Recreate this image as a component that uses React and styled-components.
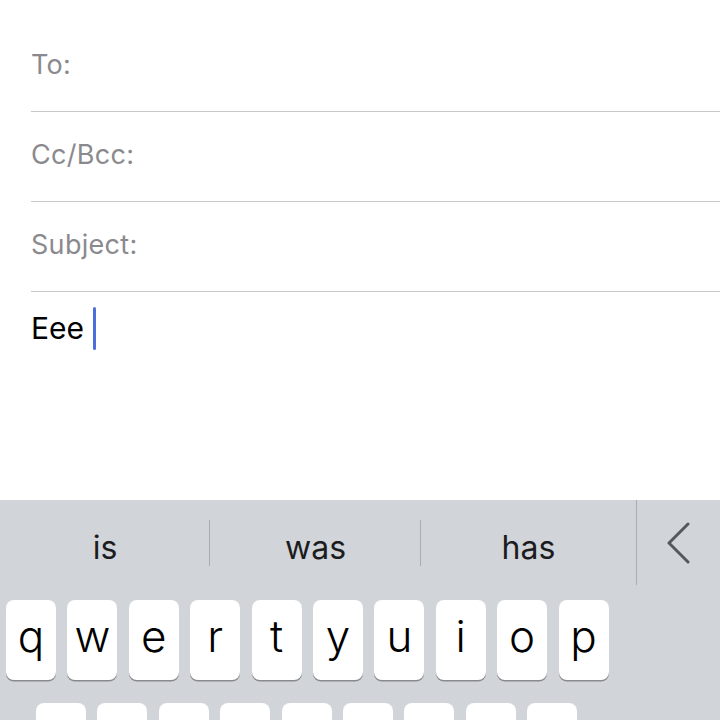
import React from "react";
import styled, { createGlobalStyle } from "styled-components";

const GlobalStyle = createGlobalStyle`
  html, body {
    margin: 0;
    padding: 0;
    background: #ffffff;
  }
`;

// 전체 화면
const Screen = styled.div`
  width: 720px;
  height: 720px;
  overflow: hidden;
  display: flex;
  flex-direction: column;
  font-family: Inter, "Liberation Sans", sans-serif;
`;

const Compose = styled.div`
  height: 500px;
  flex-shrink: 0;
  padding: 22px 0 0 31px;
  box-sizing: border-box;
`;

const FieldRow = styled.div`
  height: 90px;
  box-sizing: border-box;
  border-bottom: 1px solid #c8c7cc;
  display: flex;
  align-items: center;
  padding-bottom: 4px;
`;

const FieldLabel = styled.span`
  font-size: 27px;
  color: #8a8a8e;
  letter-spacing: 0.3px;
`;

const Body = styled.div`
  display: flex;
  align-items: center;
  height: 70px;
  padding-top: 1px;
`;

const BodyText = styled.span`
  font-size: 30px;
  color: #000;
`;

const Caret = styled.span`
  width: 3px;
  height: 43px;
  margin-left: 9px;
  border-radius: 2px;
  background: #4c6fdc;
`;

const Keyboard = styled.div`
  flex: 1;
  background: #d1d4d9;
  display: flex;
  flex-direction: column;
`;

const SuggestionBar = styled.div`
  height: 85px;
  display: flex;
  flex-shrink: 0;
`;

const Suggestion = styled.div`
  width: ${(p) => p.$width}px;
  display: flex;
  align-items: center;
  justify-content: center;
  position: relative;
  font-size: 32px;
  color: #1c1c1e;
  padding-top: 10px;
  box-sizing: border-box;

  &::after {
    content: "";
    display: ${(p) => (p.$divider ? "block" : "none")};
    position: absolute;
    right: 0;
    top: 20px;
    height: 46px;
    width: 1px;
    background: #a9acb2;
  }
`;

const BackSlot = styled.div`
  flex: 1;
  border-left: 1.5px solid #a9acb2;
  display: flex;
  align-items: flex-start;
  padding: 22px 0 0 30px;
`;

const KeyRow = styled.div`
  display: flex;
  gap: 11.4px;
  padding-left: ${(p) => p.$inset}px;
  margin-top: ${(p) => p.$top}px;
`;

const Key = styled.div`
  width: 50px;
  height: 80px;
  flex-shrink: 0;
  background: #ffffff;
  border-radius: 8px;
  box-shadow: 0 1.5px 0 #898a8d;
  display: flex;
  align-items: center;
  justify-content: center;
  font-size: 44px;
  font-weight: 300;
  color: #000;
  padding-bottom: 8px;
  box-sizing: border-box;
`;

const topRow = ["q", "w", "e", "r", "t", "y", "u", "i", "o", "p"];
const midRow = ["a", "s", "d", "f", "g", "h", "j", "k", "l"];

export default function App() {
  return (
    <>
      <GlobalStyle />
      <Screen>
        <Compose>
          <FieldRow>
            <FieldLabel>To:</FieldLabel>
          </FieldRow>
          <FieldRow>
            <FieldLabel>Cc/Bcc:</FieldLabel>
          </FieldRow>
          <FieldRow>
            <FieldLabel>Subject:</FieldLabel>
          </FieldRow>
          <Body>
            <BodyText>Eee</BodyText>
            <Caret />
          </Body>
        </Compose>
        <Keyboard>
          <SuggestionBar>
            <Suggestion $width={210} $divider>is</Suggestion>
            <Suggestion $width={211} $divider>was</Suggestion>
            <Suggestion $width={215}>has</Suggestion>
            <BackSlot>
              <svg width="24" height="42" viewBox="0 0 24 42">
                <polyline
                  points="21,2 2,21 21,40"
                  fill="none"
                  stroke="#54585e"
                  strokeWidth="3"
                  strokeLinecap="round"
                  strokeLinejoin="round"
                />
              </svg>
            </BackSlot>
          </SuggestionBar>
          <KeyRow $inset={6} $top={15}>
            {topRow.map((k) => (
              <Key key={k}>{k}</Key>
            ))}
          </KeyRow>
          <KeyRow $inset={36} $top={23}>
            {midRow.map((k) => (
              <Key key={k}>{k}</Key>
            ))}
          </KeyRow>
        </Keyboard>
      </Screen>
    </>
  );
}
